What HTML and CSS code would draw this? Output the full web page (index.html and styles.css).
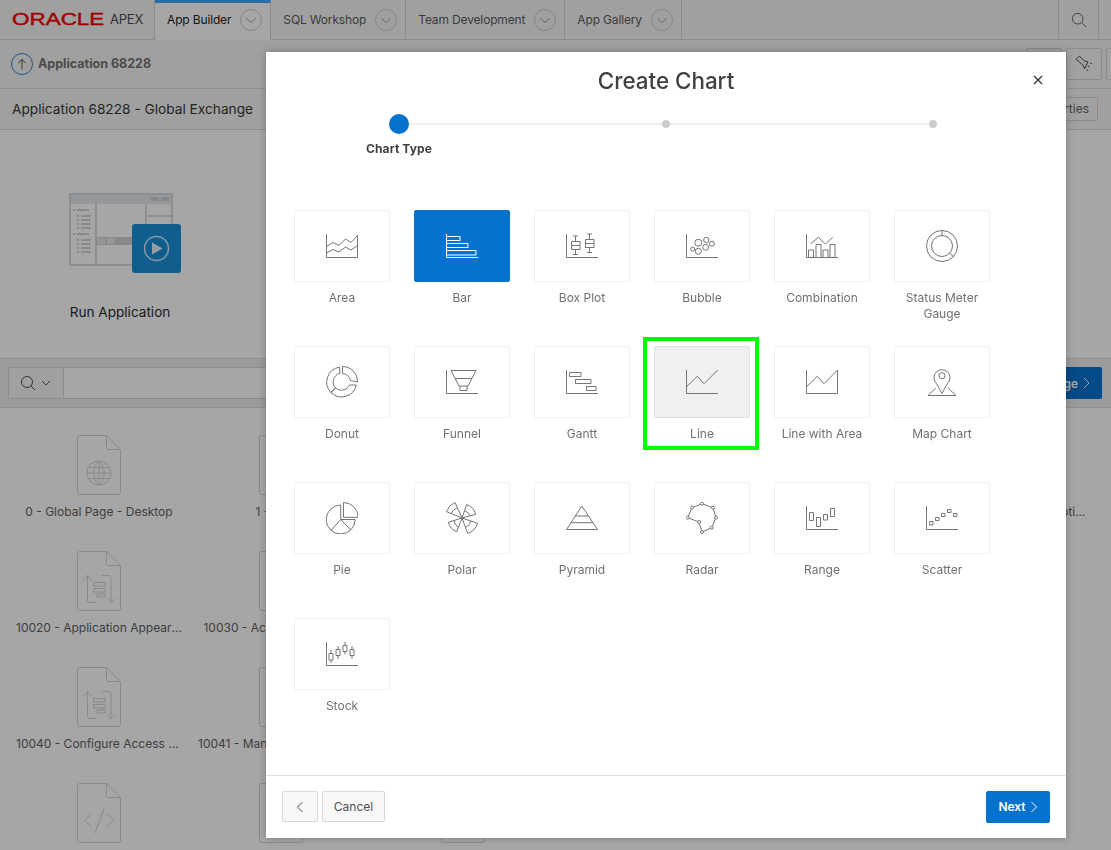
FILE: index.html
```html
<!DOCTYPE html>
<html lang="en">
<head>
  <meta charset="UTF-8" />
  <meta name="viewport" content="width=device-width,initial-scale=1.0" />
  <title>Create Chart</title>
  <link rel="stylesheet" href="styles.css">
</head>
<body>
  <svg class="sprites" aria-hidden="true">
    <symbol id="doc" viewBox="0 0 44 60">
      <path d="M2.5.5h27l14 14v43a2 2 0 0 1-2 2h-39a2 2 0 0 1-2-2v-55a2 2 0 0 1 2-2zM29.5.5v12a2 2 0 0 0 2 2h12" />
    </symbol>
    <symbol id="doc-globe" viewBox="0 0 44 60">
      <use href="#doc" />
      <path d="M34 38a12 12 0 1 1-24 0a12 12 0 1 1 24 0zM10 38h24M11.5 32.5h21M11.5 43.5h21M22 26v24M22 26c-7 6-7 18 0 24M22 26c7 6 7 18 0 24" />
    </symbol>
    <symbol id="doc-form" viewBox="0 0 44 60">
      <use href="#doc" />
      <path d="M6.500 29.500l4-5 4 5M10.500 24.500v25a2 2 0 0 0 2 2h7M24.500 24.500h7.500a2 2 0 0 1 2 2v25M30.500 47.500l3.500 4.500 4-4.500M16.500 31.500h11.500v3.500h-11.500zM16.500 37.500h11.500v3.500h-11.500z" />
      <path class="solid" d="M20 43h8.500v3H20z" />
    </symbol>
    <symbol id="doc-code" viewBox="0 0 44 60">
      <use href="#doc" />
      <path d="M14.500 31l-7 6.500 7 6.500M27 26l-9 24M30 31l7 6.500-7 6.500" />
    </symbol>
  </svg>

  <div class="page">
    <header class="topbar">
      <div class="logo"><span class="logo-mark">ORACLE</span><span class="logo-app">APEX</span></div>
      <div class="tab is-active"><span>App Builder</span><i class="tab-caret"><svg viewBox="0 0 22 22"><path d="M6 9l5 5 5-5" /></svg></i></div>
      <div class="tab"><span>SQL Workshop</span><i class="tab-caret"><svg viewBox="0 0 22 22"><path d="M6 9l5 5 5-5" /></svg></i></div>
      <div class="tab"><span>Team Development</span><i class="tab-caret"><svg viewBox="0 0 22 22"><path d="M6 9l5 5 5-5" /></svg></i></div>
      <div class="tab"><span>App Gallery</span><i class="tab-caret"><svg viewBox="0 0 22 22"><path d="M6 9l5 5 5-5" /></svg></i></div>
      <div class="topbar-search">
        <svg viewBox="0 0 18 18"><circle cx="7.500" cy="7.500" r="6" /><path d="M12 12l5 5" /></svg>
      </div>
    </header>

    <div class="crumbs">
      <span class="crumb-up"><svg viewBox="0 0 22 22"><path d="M11 17V6M7 10l4-4 4 4" /></svg></span>
      <strong>Application 68228</strong>
      <div class="crumb-tools">
        <span class="tool"></span>
        <span class="tool"><svg viewBox="0 0 18 18"><path d="M1 4.300L4.300 1 9 5.700l4 1.300-3.300 6.700-2-4zM13 11l1.500 1M12 14.500l1 1.500M15 8l2 .5" /></svg></span>
        <span class="tool"></span>
      </div>
    </div>

    <div class="app-title">
      <h2>Application 68228 - Global Exchange</h2>
      <span class="outline-btn">Edit Application Properties</span>
    </div>

    <section class="hero">
      <div class="hero-tile">
        <svg class="hero-art" viewBox="0 0 112 80">
          <g class="hero-window">
            <path class="band" d="M1 1h102v10H1z" />
            <path d="M1 1h102v71H1zM27 11v61M77 11v33M77 23h26" />
            <path class="fill" d="M82 4h8v4h-8zM92 4h8v4h-8zM27 44h50v8H27zM4 16h2v2H4zM8 16h12v2H8zM8 22h2v2H8zM12 22h10v2H12zM8 26h2v2H8zM12 26h10v2H12zM8 30h2v2H8zM12 30h10v2H12zM8 34h2v2H8zM12 34h10v2H12zM4 40h2v2H4zM8 40h12v2H8zM8 46h2v2H8zM12 46h10v2H12zM8 50h2v2H8zM12 50h10v2H12zM8 54h2v2H8zM12 54h10v2H12zM8 58h2v2H8zM12 58h10v2H12z" />
            <path class="band" d="M28 45h8v6h-8zM38 45h8v6h-8z" />
          </g>
          <rect class="hero-play-box" x="63" y="31" width="49" height="49" rx="3" />
          <circle class="hero-play-ring" cx="87.500" cy="55.500" r="12" />
          <path class="hero-play" d="M83 49.500l10.500 6-10.500 6z" />
        </svg>
        <span>Run Application</span>
      </div>
    </section>

    <div class="search-band">
      <div class="search-field">
        <span class="search-toggle">
          <svg viewBox="0 0 16 16"><circle cx="7" cy="7" r="5.500" /><path d="M11 11l4 4" /></svg>
          <svg viewBox="0 0 12 12"><path d="M2 4l4 4 4-4" /></svg>
        </span>
      </div>
      <span class="primary-btn">Create Page <svg viewBox="0 0 8 12"><path d="M2 1l5 5-5 5" /></svg></span>
    </div>

    <main class="page-grid">
      <div class="page-tile"><svg><use href="#doc-globe" /></svg><span>0 - Global Page - Desktop</span></div>
      <div class="page-tile"><svg><use href="#doc" /></svg><span>1 - Home</span></div>
      <div class="page-tile"><svg><use href="#doc" /></svg><span></span></div>
      <div class="page-tile"><svg><use href="#doc" /></svg><span></span></div>
      <div class="page-tile"><svg><use href="#doc" /></svg><span></span></div>
      <div class="page-tile"><svg><use href="#doc" /></svg><span>10010 - Theme Styles Options Setup</span></div>

      <div class="page-tile"><svg><use href="#doc-form" /></svg><span>10020 - Application Appearance Settings</span></div>
      <div class="page-tile"><svg><use href="#doc" /></svg><span>10030 - Activity Dashboard</span></div>
      <div class="page-tile is-hidden"></div>
      <div class="page-tile is-hidden"></div>
      <div class="page-tile is-hidden"></div>
      <div class="page-tile is-hidden"></div>

      <div class="page-tile"><svg><use href="#doc-form" /></svg><span>10040 - Configure Access Control</span></div>
      <div class="page-tile"><svg><use href="#doc" /></svg><span>10041 - Manage Access Roles</span></div>
      <div class="page-tile is-hidden"></div>
      <div class="page-tile is-hidden"></div>
      <div class="page-tile is-hidden"></div>
      <div class="page-tile is-hidden"></div>

      <div class="page-tile"><svg><use href="#doc-code" /></svg><span></span></div>
      <div class="page-tile"><svg><use href="#doc" /></svg><span></span></div>
      <div class="page-tile"><svg><use href="#doc" /></svg><span></span></div>
    </main>
  </div>

  <div class="overlay"></div>

  <div class="modal">
    <button class="modal-close" aria-label="Close">
      <svg viewBox="0 0 10 10"><path d="M1 1l8 8M9 1l-8 8" /></svg>
    </button>

    <div class="modal-body">
      <h1>Create Chart</h1>
      <div class="wizard-track">
        <span class="wizard-dot is-current"></span>
        <span class="wizard-line is-first"></span>
        <span class="wizard-dot"></span>
        <span class="wizard-line"></span>
        <span class="wizard-dot"></span>
      </div>
      <div class="wizard-label">Chart Type</div>

      <div class="chart-grid">
        <div class="chart-tile">
          <div class="chart-card"><svg viewBox="0 0 32 32"><path d="M.5 4v23.500h31V5M.5 16.500l6.500-4 6 3 6.500-6.500 5.500 3.500 6-6.500M.5 23l6.500-3.500 6 2.500 6.500-5 5.500 3 6-4" /></svg></div>
          <span>Area</span>
        </div>
        <div class="chart-tile is-selected">
          <div class="chart-card"><svg viewBox="0 0 32 32"><path d="M.5 4v23.500H32M.5 6.500h13.500v4H.5M.5 13.500h21.500v4H.5M.5 20.500h29.500v4.500H.5" /></svg></div>
          <span>Bar</span>
        </div>
        <div class="chart-tile">
          <div class="chart-card"><svg viewBox="0 0 32 32"><path d="M.5 4v23.500H32M5.500 11.500h8.500v8H5.500zM5.500 15.500h8.500M9.500 6v5.500M9.500 19.500v5M7 6h5M7 24.500h5M19.500 9.500h8.500v8h-8.500zM19.500 13.500h8.500M23.500 4v5.500M23.500 17.500v5M21 4h5M21 22.500h5" /></svg></div>
          <span>Box Plot</span>
        </div>
        <div class="chart-tile">
          <div class="chart-card"><svg viewBox="0 0 32 32"><path d="M.5 4v23.500H32" /><circle cx="6.700" cy="19" r="2" /><circle cx="12.300" cy="12.700" r="3.500" /><circle cx="12.300" cy="21.300" r="3" /><circle cx="19.700" cy="17.300" r="3" /><circle cx="20.300" cy="10" r="2.700" /><circle cx="26" cy="13.700" r="2.500" /></svg></div>
          <span>Bubble</span>
        </div>
        <div class="chart-tile">
          <div class="chart-card"><svg viewBox="0 0 32 32"><path d="M.5 4v23.500H32M2.500 27.500v-7.500h5v7.500M10 27.500v-13h5v13M17 27.500v-7.500h5v7.500M24 27.500v-13h5v13M4.500 14l7.800-6.700 7 6.700 7.400-6.700" /></svg></div>
          <span>Combination</span>
        </div>
        <div class="chart-tile">
          <div class="chart-card"><svg viewBox="0 0 32 32"><circle cx="16" cy="16" r="15.500" /><circle cx="16" cy="16" r="10.500" /><path d="M16 .5v5M23.500 23l5 4.500" /></svg></div>
          <span>Status Meter Gauge</span>
        </div>

        <div class="chart-tile">
          <div class="chart-card"><svg viewBox="0 0 32 32"><path d="M16.500.5a15 15 0 0 1 15 15.500L24.500 14.500a8.500 8.500 0 0 0-8-7zM13.500 1.200a15 15 0 0 0-8.500 25.300l4.500-4.500a9 9 0 0 1 4.500-14.800zM5 26.500a15 15 0 0 0 25.300-7.500h-6.800a9 9 0 0 1-14 3z" /></svg></div>
          <span>Donut</span>
        </div>
        <div class="chart-tile">
          <div class="chart-card"><svg viewBox="0 0 32 32"><path d="M.5 4v23.500H32M5 4.500h25l-8 15.500h-9zM9 12.500h17M14 20v4.500h7V20" /></svg></div>
          <span>Funnel</span>
        </div>
        <div class="chart-tile">
          <div class="chart-card"><svg viewBox="0 0 32 32"><path d="M.5 4v23.500H32M3.500 6.500h11.500v4H3.500zM9.500 13.500h15.500v4H9.500zM20.500 20.500h9.500v4h-9.500z" /></svg></div>
          <span>Gantt</span>
        </div>
        <div class="chart-tile is-hover is-marked">
          <div class="chart-card"><svg viewBox="0 0 32 32"><path d="M.5 4v23.500H32M.5 20.700l10.800-10.400 6.700 7.400L31.700 4" /></svg></div>
          <span>Line</span>
        </div>
        <div class="chart-tile">
          <div class="chart-card"><svg viewBox="0 0 32 32"><path d="M.5 4v23.500h31V4M.5 20.700l10.800-10.400 6.700 7.400L31.500 4" /></svg></div>
          <span>Line with Area</span>
        </div>
        <div class="chart-tile">
          <div class="chart-card"><svg viewBox="0 0 32 32"><path d="M16 27.500l-5.500-10a8 8 0 1 1 11 0zM10 22.500H9.500l-7.500 7h28l-7.500-7H22" /><circle cx="16" cy="9.700" r="3" /></svg></div>
          <span>Map Chart</span>
        </div>

        <div class="chart-tile">
          <div class="chart-card"><svg viewBox="0 0 32 32"><path d="M17.500.5A14.500 14.500 0 0 1 32 15.300H17.500zM14.700 3a14.500 14.500 0 1 0 14.500 14.500H14.700zM14.700 17.500L5 28.500M14.700 17.500L25 28" /></svg></div>
          <span>Pie</span>
        </div>
        <div class="chart-tile">
          <div class="chart-card"><svg viewBox="0 0 32 32"><path d="M16 16L.5 9.700A16 16 0 0 1 9 .5zM5 11.500A11 11 0 0 1 11 6M16 16l4.700-13.500a14 14 0 0 1 9 9.800zM19 9a8 8 0 0 1 5 4.500M16 16l15.700 5.300a16.500 16.500 0 0 1-10 10.200zM25 19a10 10 0 0 1-5.500 6.500M16 16L2.300 20.300a14 14 0 0 0 8.400 9.400zM8 18.500a9 9 0 0 0 4 6.500" /></svg></div>
          <span>Polar</span>
        </div>
        <div class="chart-tile">
          <div class="chart-card"><svg viewBox="0 0 32 32"><path d="M15.800 4L.5 27.500h31zM9 14h13.700M4.700 20.700h22.300" /></svg></div>
          <span>Pyramid</span>
        </div>
        <div class="chart-tile">
          <div class="chart-card"><svg viewBox="0 0 32 32"><path d="M16 1.700l11 4 3 10-4.300 10-9.700 4.300-3-10-11.300-4.300L6 5.700z" /><g class="dots"><circle cx="16" cy="1.700" r="1.500" /><circle cx="27" cy="5.700" r="1.500" /><circle cx="30" cy="15.700" r="1.500" /><circle cx="25.700" cy="25.700" r="1.500" /><circle cx="16" cy="30" r="1.500" /><circle cx="13" cy="20" r="1.500" /><circle cx="1.700" cy="15.700" r="1.500" /><circle cx="6" cy="5.700" r="1.500" /></g></svg></div>
          <span>Radar</span>
        </div>
        <div class="chart-tile">
          <div class="chart-card"><svg viewBox="0 0 32 32"><path d="M.5 4v23.500H32M3.500 10.500h4v8h-4zM10.500 15.500h4v9h-4zM17.500 12.500h4v5.500h-4zM24.500 6.500h4v8h-4z" /></svg></div>
          <span>Range</span>
        </div>
        <div class="chart-tile">
          <div class="chart-card"><svg viewBox="0 0 32 32"><path d="M.5 4v23.500H32M3.500 19.500h3.500v3.500H3.500zM9.500 15.500h3.500v3H9.500zM15.500 11.500h3.500v3h-3.500zM21.500 7.500h3.500v3h-3.500zM27.500 11.500h3.500v3h-3.500z" /></svg></div>
          <span>Scatter</span>
        </div>

        <div class="chart-tile">
          <div class="chart-card"><svg viewBox="0 0 32 32"><path d="M.5 4v23.500H32M3 15.500h4v6.500H3zM5 12v3.500M5 22v3M10 11.500h4v6H10zM12 8v3.500M12 17.500v3.500M17 7.500h4v6h-4zM19 4v3.500M19 13.500v3M24 11.500h4v6h-4zM26 8v3.500M26 17.500v3.500" /></svg></div>
          <span>Stock</span>
        </div>
      </div>
    </div>

    <footer class="modal-footer">
      <span class="btn btn-icon"><svg viewBox="0 0 8 12"><path d="M6.500 1l-5 5 5 5" /></svg></span>
      <span class="btn">Cancel</span>
      <span class="btn btn-next">Next <svg viewBox="0 0 8 12"><path d="M1.500 1l5 5-5 5" /></svg></span>
    </footer>
  </div>
</body>
</html>
```

FILE: styles.css
```css
* { box-sizing: border-box; }
html, body { height: 100%; }
body {
  margin: 0;
  overflow: hidden;
  background: #fff;
  color: #626262;
  font-family: "Inter", "Liberation Sans", sans-serif;
  font-size: 12px;
}
.sprites { position: absolute; width: 0; height: 0; }
svg { display: block; fill: none; stroke: currentColor; }

/* page behind the dialog */
.page { width: 1111px; height: 850px; overflow: hidden; }

.topbar {
  display: flex;
  height: 40px;
  background: #f6f6f6;
  border-bottom: 1px solid #d6d6d6;
}
.logo {
  display: flex;
  align-items: center;
  flex: none;
  width: 155px;
  padding: 0 0 1px 12px;
  border-right: 1px solid #d6d6d6;
}
.logo-mark {
  display: inline-block;
  width: 98px;
  font-family: "Liberation Sans", sans-serif;
  font-size: 16.500px;
  font-weight: 400;
  color: #f80000;
  -webkit-text-stroke: .4px #f80000;
  transform: scaleX(1.36);
  transform-origin: left center;
}
.logo-app { font-size: 13px; color: #4c4c4c; letter-spacing: -.2px; }
.tab {
  display: flex;
  align-items: center;
  gap: 9px;
  height: 40px;
  padding: 0 8px 1px 12px;
  border-right: 1px solid #d6d6d6;
  font-size: 12px;
  letter-spacing: -.15px;
  color: #5c5c5c;
}
.tab.is-active { background: #fff; border-top: 3px solid #44a8fd; padding-bottom: 4px; color: #222; }
.tab-caret {
  width: 22px;
  height: 22px;
  border: 1px solid #cfcfcf;
  border-radius: 50%;
  color: #8f8f8f;
}
.tab-caret svg { width: 20px; height: 20px; }
.topbar-search {
  display: flex;
  align-items: center;
  justify-content: center;
  width: 41px;
  margin-left: auto;
  margin-right: 12px;
  border-left: 1px solid #d6d6d6;
  border-right: 1px solid #d6d6d6;
  color: #555;
}
.topbar-search svg { width: 16px; height: 16px; }

.crumbs {
  display: flex;
  align-items: center;
  height: 49px;
  padding: 0 0 1px 11px;
  background: #f6f6f6;
  border-bottom: 1px solid #dcdcdc;
}
.crumb-up {
  width: 22px;
  height: 22px;
  margin-right: 5px;
  border: 1px solid #2f8ad6;
  border-radius: 50%;
  color: #444;
}
.crumb-up svg { width: 20px; height: 20px; }
.crumbs strong { font-size: 12.500px; font-weight: 700; color: #737373; }
.crumb-tools { display: flex; gap: 4px; margin-left: auto; margin-right: -31px; }
.tool {
  display: flex;
  align-items: center;
  justify-content: center;
  width: 36px;
  height: 32px;
  background: #f8f8f8;
  border: 1px solid #d4d4d4;
  border-radius: 2px;
  color: #4c4c4c;
}
.tool svg { width: 18px; height: 18px; }

.app-title {
  display: flex;
  align-items: center;
  justify-content: space-between;
  height: 41px;
  padding: 0 13px 1px 12px;
  background: #f6f6f6;
  border-bottom: 1px solid #dcdcdc;
}
.app-title h2 { margin: 0; font-size: 13.700px; font-weight: 400; color: #383838; }
.outline-btn {
  display: flex;
  align-items: center;
  height: 24px;
  padding: 0 8px;
  border: 1px solid #d4d4d4;
  border-radius: 2px;
  font-size: 12px;
  color: #666;
}

.hero { height: 229px; background: #fff; border-bottom: 1px solid #dcdcdc; }
.hero-tile {
  display: flex;
  flex-direction: column;
  align-items: center;
  width: 240px;
  padding-top: 63px;
  font-size: 13.600px;
  color: #2a2a2a;
}
.hero-art { width: 112px; height: 80px; margin-left: 10px; margin-bottom: 31px; }
.hero-window path { stroke: #d8dcdf; stroke-width: 2; }
.hero-window path.fill { fill: #cfd3d6; stroke: none; }
.hero-window path.band { fill: #e6e8ea; stroke: none; }
.hero-play-box { fill: #1791da; stroke: none; }
.hero-play-ring { stroke: #fff; stroke-width: 1.500; opacity: .8; }
.hero-play { fill: #fff; stroke: none; opacity: .9; }

.search-band {
  display: flex;
  align-items: center;
  gap: 4px;
  height: 49px;
  padding: 0 9px 0 8px;
  background: #eee;
  border-bottom: 1px solid #dcdcdc;
}
.search-field {
  flex: 1;
  height: 32px;
  background: #fff;
  border: 1px solid #d8d8d8;
}
.search-toggle {
  display: flex;
  align-items: center;
  gap: 4px;
  width: 55px;
  height: 30px;
  padding-left: 11px;
  background: #f6f6f6;
  border-right: 1px solid #d8d8d8;
  color: #555;
}
.search-toggle svg:first-child { width: 16px; height: 16px; }
.search-toggle svg:last-child { width: 12px; height: 12px; }
.primary-btn {
  display: flex;
  align-items: center;
  gap: 4px;
  height: 32px;
  padding: 0 12px;
  background: #0572ce;
  border-radius: 2px;
  font-size: 12px;
  font-weight: 600;
  color: #fff;
}
.primary-btn svg { width: 8px; height: 12px; }

.page-grid {
  display: grid;
  grid-template-columns: repeat(6, 182px);
  grid-auto-rows: 116px;
  padding: 27px 0 0 8px;
  background: #fff;
}
.page-tile {
  display: flex;
  flex-direction: column;
  align-items: center;
  font-size: 12px;
  color: #626262;
}
.page-tile svg { width: 44px; height: 60px; margin-bottom: 9px; stroke: #d4d4d4; color: #d4d4d4; }
.page-tile .solid { fill: #c2c2c2; stroke: none; }
.page-tile span {
  max-width: 166px;
  line-height: 16px;
  white-space: nowrap;
  overflow: hidden;
  text-overflow: ellipsis;
}

.overlay { position: fixed; inset: 0; background: rgba(0,0,0,.35); }

/* dialog */
.modal {
  position: absolute;
  left: 266px;
  top: 52px;
  display: flex;
  flex-direction: column;
  width: 800px;
  height: 786px;
  background: #fff;
  box-shadow: 0 0 8px rgba(0,0,0,.25);
}
.modal-close {
  position: absolute;
  top: 23px;
  right: 23px;
  width: 10px;
  height: 10px;
  padding: 0;
  border: 0;
  background: none;
  color: #333;
}
.modal-close svg { width: 10px; height: 10px; stroke-width: 1.300; }
.modal-body { flex: 1; padding-top: 14px; }
.modal-body h1 {
  margin: 0;
  font-size: 22.400px;
  font-weight: 500;
  line-height: 30px;
  text-align: center;
  color: #404040;
}
.wizard-track {
  display: flex;
  align-items: center;
  width: 548px;
  height: 20px;
  margin: 18px 0 0 123px;
}
.wizard-dot { flex: none; width: 8px; height: 8px; border-radius: 50%; background: #ccc; }
.wizard-dot.is-current { width: 20px; height: 20px; background: #0572ce; }
.wizard-line { flex: 1; height: 2px; background: #eee; }
.wizard-line.is-first { flex: none; width: 253px; }
.wizard-label {
  width: 100px;
  margin: 7px 0 0 83px;
  font-size: 12px;
  font-weight: 700;
  line-height: 16px;
  letter-spacing: .1px;
  text-align: center;
  color: #404040;
}

.chart-grid {
  display: grid;
  grid-template-columns: repeat(6, 96px);
  grid-auto-rows: 136px;
  column-gap: 24px;
  margin: 53px 0 0 28px;
}
.chart-tile { position: relative; font-size: 12px; line-height: 16px; text-align: center; color: #707070; }
.chart-tile span { display: block; margin-top: 8px; }
.chart-card {
  display: flex;
  align-items: center;
  justify-content: center;
  height: 72px;
  background: #fff;
  border: 1px solid #f0f0f0;
  border-radius: 2px;
  color: #757575;
}
.chart-card svg { width: 32px; height: 32px; }
.chart-card .dots circle { fill: #fff; }
.is-selected .chart-card { background: #0572ce; border-color: #0572ce; color: #fff; }
.is-hover .chart-card { background: #f0f0f0; border-color: #e2e2e2; }
/* green marker round the Line tile */
.is-marked::after {
  content: "";
  position: absolute;
  left: -11px;
  right: -9px;
  top: -9px;
  bottom: 32px;
  border: 4px solid #00ff00;
}

.modal-footer {
  display: flex;
  align-items: flex-start;
  gap: 4px;
  height: 63px;
  padding: 15px 16px 0;
  border-top: 1px solid #e0e0e0;
}
.btn {
  display: flex;
  align-items: center;
  justify-content: center;
  width: 63px;
  height: 31px;
  background: #f8f8f8;
  border: 1px solid #d8d8d8;
  border-radius: 2px;
  font-size: 12px;
  color: #505050;
}
.btn-icon { width: 36px; }
.btn svg { width: 8px; height: 12px; }
.btn-next {
  gap: 4px;
  width: 64px;
  height: 32px;
  padding-bottom: 1px;
  margin-left: auto;
  background: #0572ce;
  border-color: #0572ce;
  font-weight: 600;
  color: #fff;
}
```
